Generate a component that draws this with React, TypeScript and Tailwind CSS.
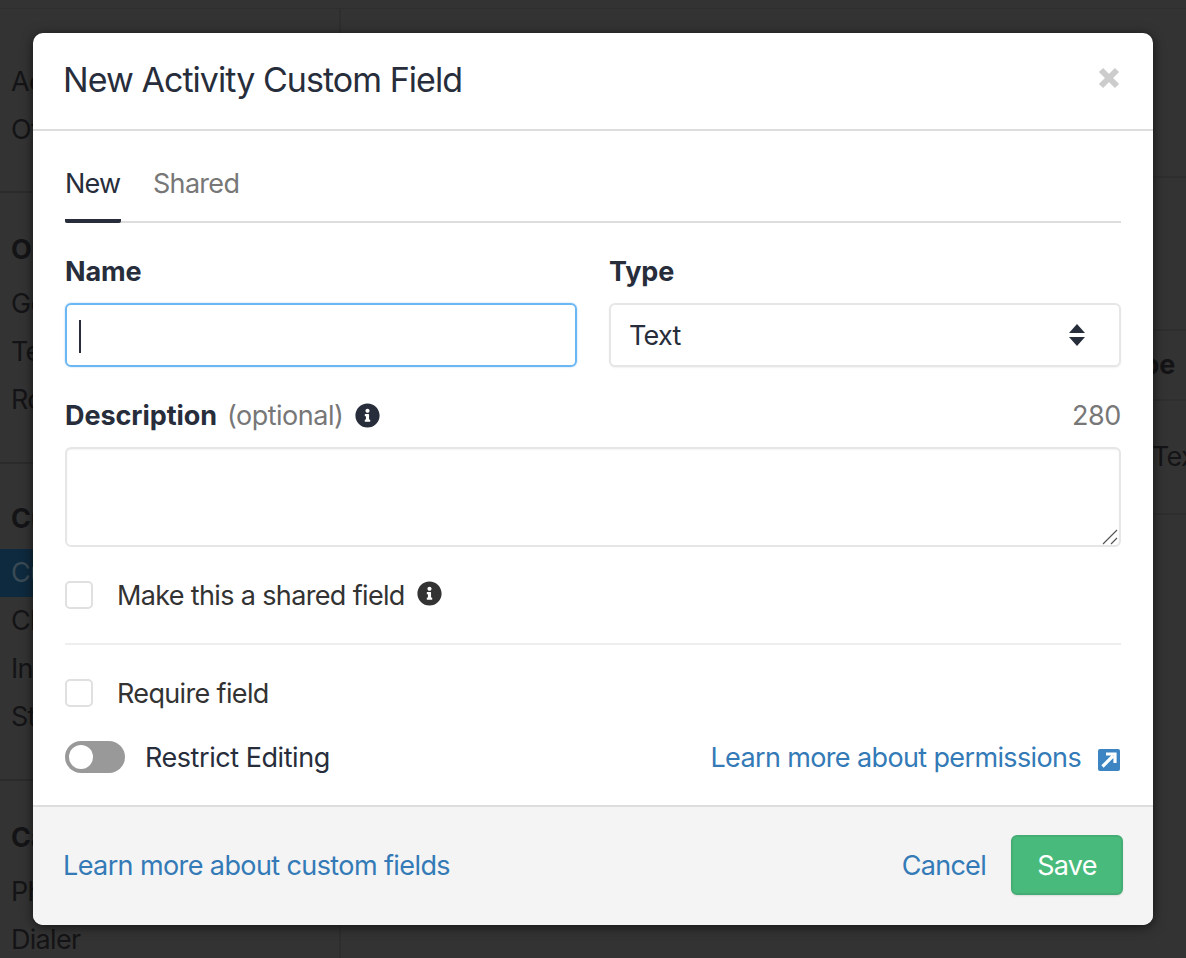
import React from "react";
import { FaInfoCircle } from "react-icons/fa";

const SideHeader = ({ label }: { label: string }) => (
  <div className="h-12 flex items-center font-bold tracking-[-0.15px] mb-[6px]">{label}</div>
);

const SideRow = ({ label, active }: { label: string; active?: boolean }) => (
  <div className={`h-12 flex items-center pl-3 -ml-3 ${active ? "bg-[#0e2a3e] text-[#3a4a55]" : ""}`}>{label}</div>
);

// dimmed settings page behind the dialog
const Backdrop = () => (
  <div className="h-[958px] bg-[#333333] text-[#141416] overflow-hidden flex flex-col">
    <div className="h-[9px] shrink-0 border-b border-[#2e2e2e]" />
    <div className="flex flex-1">
      <div className="w-[341px] shrink-0 border-r-2 border-[#2e2e2e] pl-[11px]">
        <div className="h-[184px] pt-[49px] border-b-2 border-[#2b2b2b] -ml-[11px] pl-[11px]">
          <SideRow label="Activities" />
          <SideRow label="Other" />
        </div>
        <div className="h-[271px] pt-[33px] border-b-2 border-[#2b2b2b] -ml-[11px] pl-[11px]">
          <SideHeader label="Organization" />
          <SideRow label="General" />
          <SideRow label="Team" />
          <SideRow label="Roles" />
        </div>
        <div className="h-[317px] pt-[31px] border-b-2 border-[#2b2b2b] -ml-[11px] pl-[11px]">
          <SideHeader label="Customize" />
          <SideRow label="Custom Fields" active />
          <SideRow label="Choices" />
          <SideRow label="Integrations" />
          <SideRow label="Statuses" />
        </div>
        <div className="pt-[33px]">
          <SideHeader label="Calling" />
          <SideRow label="Phone" />
          <SideRow label="Dialer" />
        </div>
      </div>
      <div className="flex-1 flex flex-col">
        <div className="h-[169px] shrink-0 border-b-2 border-[#2e2e2e]" />
        <div className="h-[153px] shrink-0 border-b-2 border-[#2e2e2e]" />
        <div className="h-[70px] shrink-0 border-b-2 border-[#2e2e2e] pl-[769px] flex items-center font-bold tracking-[-0.15px]">Type</div>
        <div className="h-[114px] shrink-0 border-b-2 border-[#2e2e2e] pl-[811px] flex items-center">Text</div>
      </div>
    </div>
  </div>
);

const Check = ({ label, info }: { label: string; info?: boolean }) => (
  <label className="flex items-center h-7">
    <input type="checkbox" className="appearance-none w-7 h-7 rounded-[5px] border-2 border-[#e0e0e0] bg-white" />
    <span className="ml-[24px] text-[#333333] tracking-[-0.65px]">{label}</span>
    {info && <FaInfoCircle className="ml-[12px] -mt-[3px] text-[#333333]" size={25} />}
  </label>
);

export default function App() {
  return (
    <div className="relative h-[958px] overflow-hidden font-['Inter',sans-serif] text-[27px] tracking-[-0.7px]">
      <Backdrop />
      <div className="absolute left-[33px] top-[33px] w-[1120px] h-[892px] bg-white rounded-[10px] shadow-[0_2px_12px_rgba(0,0,0,0.6)] flex flex-col overflow-hidden leading-none text-[#272d3b]">
        <div className="h-[98px] shrink-0 border-b-2 border-[#dddddd] pl-[30px] pr-[33px] flex items-center justify-between">
          <h2 className="text-[34px] tracking-[-0.95px] -mt-[2px]">New Activity Custom Field</h2>
          <svg width="22" height="22" viewBox="0 0 22 22" className="-mt-[6px]">
            <path d="M3 3 L19 19 M19 3 L3 19" stroke="#cccccc" strokeWidth="6" />
          </svg>
        </div>

        <div className="flex-1 px-8">
          <div className="flex gap-8 h-[92px] border-b-2 border-[#dddddd] items-end">
            <div className="h-[62px] w-[56px] border-b-[4px] border-[#272d3b] -mb-[2px] rounded-[2px] pt-[9px] tracking-[-0.8px]">New</div>
            <div className="h-[62px] -mb-[2px] pt-[9px] text-[#777777]">Shared</div>
          </div>

          <div className="grid grid-cols-2 gap-8 mt-[34px]">
            <div>
              <div className="font-bold tracking-[-0.15px] h-7 flex items-center">Name</div>
              <div className="relative mt-[18px]">
                <input className="w-full h-16 rounded-[6px] border-2 border-[#6cb6f2] outline-none shadow-[0_0_2px_rgba(108,182,242,0.6)]" />
                <span className="absolute left-[14px] top-[17px] w-[2px] h-[33px] bg-[#272d3b]" />
              </div>
            </div>
            <div>
              <div className="font-bold tracking-[-0.15px] h-7 flex items-center">Type</div>
              <div className="relative mt-[18px]">
                <select className="w-full h-16 rounded-[6px] border-2 border-[#e6e6e6] bg-white appearance-none pl-[18px] outline-none shadow-[0_1px_2px_rgba(0,0,0,0.06)]">
                  <option>Text</option>
                </select>
                <svg width="16" height="22" viewBox="0 0 16 22" className="absolute right-[36px] top-[21px]">
                  <path d="M8 0 L16 9 H0 Z M0 13 H16 L8 22 Z" fill="#272d3b" />
                </svg>
              </div>
            </div>
          </div>

          <div className="flex items-center mt-[34px] h-7">
            <span className="font-bold tracking-[-0.07px]">Description</span>
            <span className="ml-[10px] text-[#777777] tracking-[-0.5px]">(optional)</span>
            <FaInfoCircle className="ml-[12px] text-[#272d3b]" size={25} />
            <span className="ml-auto text-[#777777] tracking-[-0.4px]">280</span>
          </div>
          <div className="relative mt-[18px]">
            <textarea className="block w-full h-[100px] resize-none rounded-[6px] border-2 border-[#e6e6e6] outline-none shadow-[inset_0_1px_2px_rgba(0,0,0,0.05)]" />
            <svg width="16" height="16" viewBox="0 0 16 16" className="absolute right-[3px] bottom-[2px]">
              <path d="M1 15 L15 1 M9 15 L15 9" stroke="#555555" strokeWidth="1.2" />
            </svg>
          </div>

          <div className="mt-[34px]">
            <Check label="Make this a shared field" info />
          </div>
          <div className="border-t-2 border-[#eeeeee] mt-[34px] pt-[34px]">
            <Check label="Require field" />
          </div>

          <div className="flex items-center mt-[34px] h-8">
            <div className="w-[60px] h-8 rounded-full bg-[#999999] p-1">
              <div className="w-6 h-6 rounded-full bg-white" />
            </div>
            <span className="ml-[20px] tracking-[-0.45px]">Restrict Editing</span>
            <a className="ml-auto text-[#337ab7] tracking-[-0.63px]">Learn more about permissions</a>
            <svg width="22" height="22" viewBox="0 0 22 22" className="ml-[17px] mr-px mt-[5px]">
              <rect width="22" height="22" rx="2" fill="#3c85c2" />
              <path d="M4.5 17.5 L15 7 M8 5 H17 V14" stroke="#ffffff" strokeWidth="3.2" fill="none" />
            </svg>
          </div>
        </div>

        <div className="h-[120px] shrink-0 border-t-2 border-[#dddddd] bg-[#f4f4f4] px-[30px] pb-[2px] flex items-center">
          <a className="text-[#337ab7] tracking-[-0.6px]">Learn more about custom fields</a>
          <a className="ml-auto text-[#337ab7]">Cancel</a>
          <button className="ml-[25px] w-[112px] h-[60px] rounded-[6px] bg-[#48bb7c] border-2 border-[#43ad73] text-white shadow-[0_1px_2px_rgba(0,0,0,0.1)]">Save</button>
        </div>
      </div>
    </div>
  );
}
